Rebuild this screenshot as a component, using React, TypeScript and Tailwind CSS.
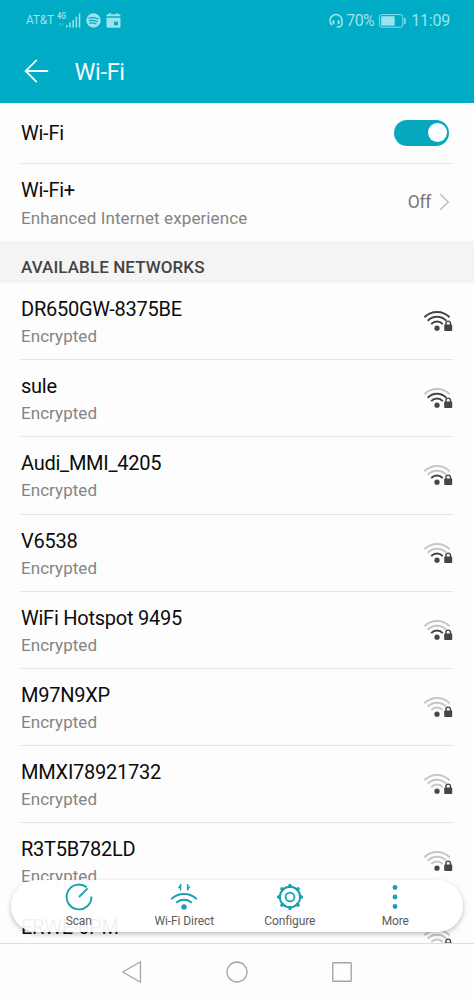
import React from 'react';

interface Network {
    name: string;
    strength: number;
    status?: string;
}

const networks: Network[] = [
    { name: 'DR650GW-8375BE', strength: 3, status: 'Encrypted' },
    { name: 'sule', strength: 2, status: 'Encrypted' },
    { name: 'Audi_MMI_4205', strength: 1, status: 'Encrypted' },
    { name: 'V6538', strength: 1, status: 'Encrypted' },
    { name: 'WiFi Hotspot 9495', strength: 1, status: 'Encrypted' },
    { name: 'M97N9XP', strength: 0, status: 'Encrypted' },
    { name: 'MMXI78921732', strength: 0, status: 'Encrypted' },
    { name: 'R3T5B782LD', strength: 0, status: 'Encrypted' },
    { name: 'ERWE-6PM', strength: 0 },
];

/** Wi-Fi signal with up to three lit arcs and a padlock. */
const SignalIcon: React.FC<{ strength: number }> = ({ strength }) => {
    const arc = (level: number) => (strength >= level ? '#454545' : '#c6c6c6');
    return (
        <svg width="30" height="24" viewBox="0 0 30 24" fill="none" strokeWidth="2">
            <path d="M1.4 8.2a17.6 17.6 0 0 1 25.2 0" stroke={arc(3)} />
            <path d="M4.7 11.7a12.9 12.9 0 0 1 18.6 0" stroke={arc(2)} />
            <path d="M8.2 15.1a8 8 0 0 1 11.6 0" stroke={arc(1)} />
            <circle cx="14" cy="19.2" r="2.6" fill="#454545" />
            <rect x="21.2" y="15.4" width="8" height="6.6" rx="0.8" fill="#454545" />
            <path d="M22.9 16v-1.6a2.3 2.3 0 0 1 4.6 0V16" stroke="#454545" strokeWidth="1.4" />
        </svg>
    );
};

const StatusBar = () => (
    <div className="flex h-10 items-center justify-between pl-[26px] pr-[24px] text-[#9be3ed]">
        <div className="flex items-center">
            <span className="w-[29px] text-[12px] leading-4 tracking-[-0.2px]">AT&amp;T</span>
            <svg className="ml-px" width="26" height="18" viewBox="0 0 26 18" fill="currentColor">
                <text x="1.3" y="8.2" fontSize="9" fontWeight="700" textLength="8.5" lengthAdjust="spacingAndGlyphs">4G</text>
                <path d="M3 12h2v3H3zM6 12h1.5v3H6z" opacity=".3" />
                <path d="M10 14h1.5v2.6H10zM13.2 11.6h1.5v5h-1.5zM16.4 9h1.5v7.6h-1.5zM19.6 5.8h1.5v10.8h-1.5zM22.8 2.6h1.5v14h-1.5z" />
            </svg>
            <svg className="ml-1" width="15" height="15" viewBox="0 0 15 15">
                <circle cx="7.5" cy="7.5" r="7.2" fill="currentColor" />
                <path d="M3 5.1q4.8-1.4 9.2.9M3.3 7.7q4.1-1.1 7.8.9M3.7 10.1q3.4-.8 6.2.8" fill="none" stroke="#00abc5" strokeWidth="1.2" strokeLinecap="round" />
            </svg>
            <svg className="ml-[5px]" width="15" height="15" viewBox="0 0 15 15">
                <path d="M1.6 1.2H3V0h1.6v1.2h5.8V0H12v1.2h1.3Q14.5 1.2 14.5 2.4v.8H.5v-.8Q.5 1.2 1.6 1.2ZM.5 4.8h14v8.6q0 1.3-1.3 1.3H1.8Q.5 14.7.5 13.4Z" fill="currentColor" />
                <path d="M8 8.6h4v3.7H8z" fill="#00abc5" />
            </svg>
        </div>
        <div className="flex items-center pt-px">
            <svg width="14" height="15" viewBox="0 0 14 15" fill="none" stroke="currentColor" strokeWidth="1.6">
                <path d="M3.2 12.2A6 6 0 1 1 13 7.3v3.2q0 3.3-3.7 3.5H7.5" />
                <path d="M4.4 7.3v4M9.6 7.3v4" strokeWidth="2" />
            </svg>
            <span className="ml-[3px] text-[16px] leading-4 tracking-[-0.6px]">70%</span>
            <svg className="ml-[5px]" width="28" height="14" viewBox="0 0 28 14">
                <rect x=".6" y=".6" width="23.2" height="12.6" rx="2" fill="none" stroke="currentColor" strokeWidth="0.9" />
                <path d="M2.2 2.2h13.4v9.4H2.2z" fill="currentColor" />
                <path d="M25.2 4h1.4v6h-1.4z" fill="currentColor" />
            </svg>
            <span className="ml-1 text-[16px] leading-4 tracking-[-0.2px]">11:09</span>
        </div>
    </div>
);

const ScanIcon = () => (
    <svg width="28" height="28" viewBox="0 0 28 28" fill="none" stroke="#1b9fb3" strokeWidth="1.9">
        <path d="M21.7 4.2A12.4 12.4 0 1 0 26.4 13.6" />
        <path d="M14 14l8.6-8.6" />
    </svg>
);

const DirectIcon = () => (
    <svg width="28" height="28" viewBox="0 0 28 28" fill="none" stroke="#1b9fb3" strokeWidth="1.9">
        <path d="M1.2 16.1a18.8 18.8 0 0 1 25.6 0M6.2 19.8a11.4 11.4 0 0 1 15.6 0" />
        <circle cx="14" cy="24" r="2.7" fill="#1b9fb3" stroke="none" />
        <path d="M10.6 7.6V1M17.6 1v6.6" strokeWidth="1.4" />
        <path d="M11 .8v4.4H7.6ZM17.2 7.8V3.4h3.6Z" fill="#1b9fb3" stroke="none" />
    </svg>
);

const GearIcon = () => (
    <svg width="28" height="28" viewBox="0 0 28 28" fill="none" stroke="#1b9fb3">
        <circle cx="14" cy="14" r="10.2" strokeWidth="2" />
        <circle cx="14" cy="14" r="4.4" strokeWidth="1.8" />
        <g strokeWidth="3.4" strokeLinecap="round">
            {[0, 45, 90, 135, 180, 225, 270, 315].map((angle) => (
                <path key={angle} d="M14 2.5v1" transform={`rotate(${angle} 14 14)`} />
            ))}
        </g>
    </svg>
);

const MoreIcon = () => (
    <svg width="28" height="28" viewBox="0 0 28 28" fill="#1b9fb3">
        <circle cx="14" cy="4.5" r="2.4" />
        <circle cx="14" cy="14" r="2.4" />
        <circle cx="14" cy="23.5" r="2.4" />
    </svg>
);

const actions = [
    { label: 'Scan', icon: <ScanIcon /> },
    { label: 'Wi-Fi Direct', icon: <DirectIcon /> },
    { label: 'Configure', icon: <GearIcon /> },
    { label: 'More', icon: <MoreIcon /> },
];

export default function App() {
    return (
        <div className="flex h-[1000px] w-[474px] flex-col overflow-hidden bg-[#fdfdfd] font-['Roboto',sans-serif] text-[#0c0c0c]">
            <div className="relative h-[943px] shrink-0 overflow-hidden">
                <header className="h-[102.5px] bg-[#00abc5]">
                    <StatusBar />
                    <div className="flex h-[62px] items-center pl-6 text-[#f2fdff]">
                        <svg width="25" height="24" viewBox="0 0 25 24" fill="none" stroke="currentColor" strokeWidth="1.8">
                            <path d="M12.8.8 1.6 12l11.2 11.2M1.6 12H24.2" />
                        </svg>
                        <h1 className="ml-[25.5px] pt-[2px] text-[23.5px] leading-7 tracking-[-0.3px]">Wi-Fi</h1>
                    </div>
                </header>

                <div className="mx-[21px] flex h-[61px] items-center justify-between border-b border-[#e3e3e3] pr-1">
                    <span className="pt-px text-[20px] tracking-[-0.25px]">Wi-Fi</span>
                    <div className="flex h-[26px] w-[55px] items-center justify-end rounded-full bg-[#08a7c0] pr-[2px]">
                        <div className="size-[19px] rounded-full bg-white" />
                    </div>
                </div>

                <div className="flex h-[77.5px] items-center justify-between pl-[21px] pr-6">
                    <div className="pt-[3px]">
                        <div className="text-[20px] leading-7 tracking-[-0.25px]">Wi-Fi+</div>
                        <div className="text-[17px] leading-7 tracking-[0.1px] text-[#848484]">Enhanced Internet experience</div>
                    </div>
                    <div className="flex items-center text-[17.5px] tracking-[-0.3px] text-[#777]">
                        Off
                        <svg className="ml-2" width="11" height="18" viewBox="0 0 11 18" fill="none" stroke="#c6c6c6" strokeWidth="1.7">
                            <path d="M1.2 1.2 9.2 9l-8 7.8" />
                        </svg>
                    </div>
                </div>

                <div className="flex h-[42px] items-center bg-[#f4f4f4] pl-[21px] pt-[11px] text-[17px] font-medium tracking-[0.08px] text-[#444]">
                    AVAILABLE NETWORKS
                </div>

                <div className="mx-[21px]">
                    {networks.map(({ name, strength, status }) => (
                        <div key={name} className="flex h-[77.2px] items-center justify-between border-b border-[#e3e3e3]">
                            <div className="self-start pt-[12px]">
                                <div className="text-[20px] leading-7 tracking-[-0.25px]">{name}</div>
                                {status && <div className="text-[17px] leading-[27px] tracking-[0.05px] text-[#848484]">{status}</div>}
                            </div>
                            <SignalIcon strength={strength} />
                        </div>
                    ))}
                </div>

                {/* Floating action bar */}
                <div className="absolute left-[11px] top-[880px] grid h-[52px] w-[452px] grid-cols-4 rounded-full bg-white/94 px-[15px] pt-[3px] shadow-[0_2px_5px_rgba(0,0,0,0.25)]">
                    {actions.map((action) => (
                        <div key={action.label} className="flex flex-col items-center">
                            {action.icon}
                            <span className="mt-[2px] text-[12px] leading-4 tracking-[-0.1px] text-[#5c5c5c]">{action.label}</span>
                        </div>
                    ))}
                </div>
            </div>

            {/* System navigation */}
            <nav className="flex flex-1 items-center justify-center gap-[83px] border-t border-[#dedede]">
                <svg width="22" height="24" viewBox="0 0 22 24" fill="none" stroke="#a5a5a5" strokeWidth="1.3">
                    <path d="M19.5 1.8v20.4L1.8 12Z" strokeLinejoin="round" />
                </svg>
                <svg width="22" height="22" viewBox="0 0 22 22" fill="none" stroke="#a5a5a5" strokeWidth="1.3">
                    <circle cx="11" cy="11" r="10" />
                </svg>
                <svg width="22" height="22" viewBox="0 0 22 22" fill="none" stroke="#a5a5a5" strokeWidth="1.4">
                    <rect x="1.8" y="1.8" width="18.4" height="18.4" rx="0.8" />
                </svg>
            </nav>
        </div>
    );
}
